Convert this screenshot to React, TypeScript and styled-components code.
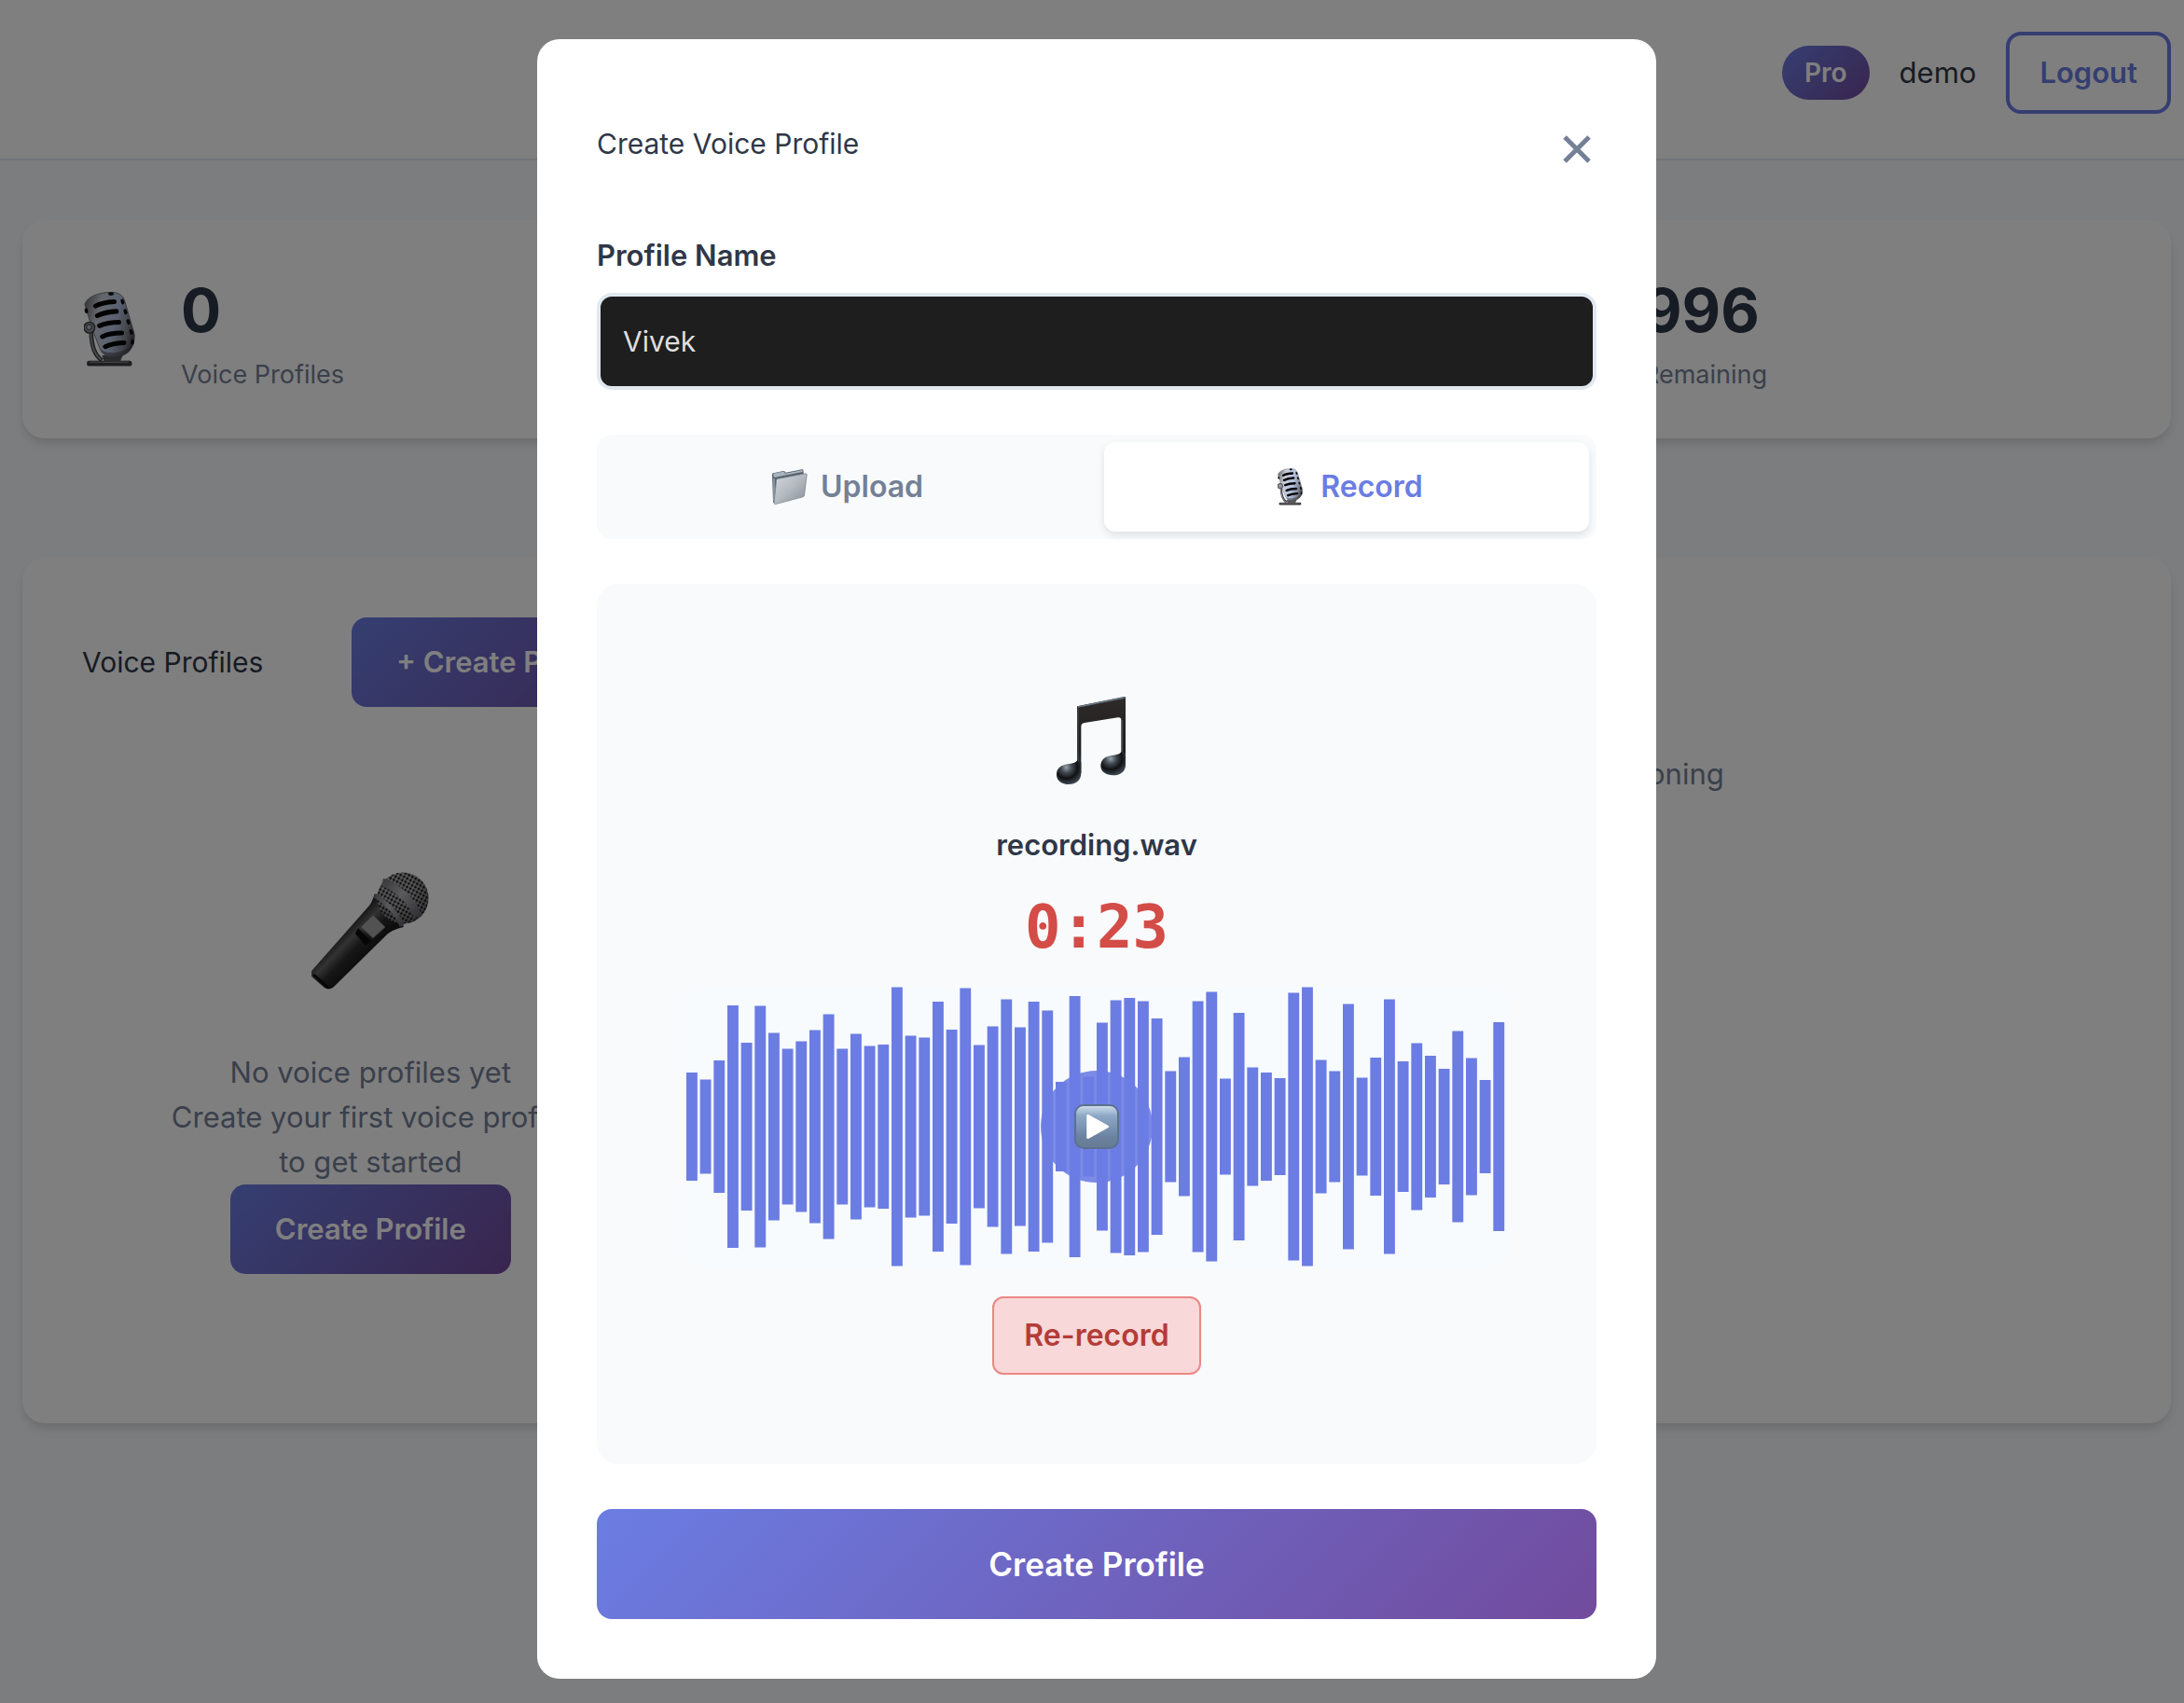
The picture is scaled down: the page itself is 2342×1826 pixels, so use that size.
import React, { useState } from 'react';
import styled, { createGlobalStyle, css } from 'styled-components';

const ink = '#2f3747';
const muted = '#748096';
const primary = '#6b7de3';
const gradient = 'linear-gradient(135deg, #6b7de3 0%, #714b9d 100%)';
const cardShadow = '0 8px 12px -2px rgba(0, 0, 0, 0.1), 0 4px 8px -2px rgba(0, 0, 0, 0.06)';

const GlobalStyle = createGlobalStyle`
  *, *::before, *::after { box-sizing: border-box; }
  body {
    margin: 0;
    background: #f8fafc;
    color: ${ink};
    font-family: Inter, "Liberation Sans", sans-serif;
    font-size: 31px;
    line-height: 48px;
  }
  button, input { font: inherit; }
  button { cursor: pointer; }
  p { margin: 0; }
  h1, h2 { margin: 0; font-size: 30px; font-weight: 400; }
  svg { display: block; }
`;

const Page = styled.div`
  min-height: 100vh;
`;

const Header = styled.header`
  display: flex;
  justify-content: flex-end;
  align-items: center;
  gap: 32px;
  padding: 34px 14px 48px 24px;
  background: #fff;
  border-bottom: 2px solid #e2e8f0;
`;

const Badge = styled.span`
  padding: 8px 24px;
  border-radius: 32px;
  background: ${gradient};
  color: #fff;
  font-size: 28px;
  line-height: 42px;
  font-weight: 600;
`;

const LogoutButton = styled.button`
  padding: 16px 32px;
  border: 4px solid ${primary};
  border-radius: 16px;
  background: transparent;
  color: ${primary};
  font-weight: 600;
`;

const Main = styled.main`
  padding: 64px 14px 64px 24px;
`;

const Stats = styled.section`
  display: grid;
  grid-template-columns: repeat(3, 1fr);
  gap: 48px;
  margin-bottom: 128px;
`;

const Card = styled.div`
  border-radius: 24px;
  background: #fff;
  box-shadow: ${cardShadow};
`;

const StatCard = styled(Card)`
  display: flex;
  align-items: center;
  gap: 48px;
  padding: 48px 64px;
`;

const StatIcon = styled.div`
  display: flex;
  justify-content: center;
  width: 58px;
`;

const StatValue = styled.div`
  font-size: 64px;
  line-height: 98px;
  font-weight: 700;
`;

const StatLabel = styled.div`
  color: ${muted};
  font-size: 27px;
  line-height: 40px;
`;

const Columns = styled.section`
  display: grid;
  grid-template-columns: 1fr 2fr;
  gap: 64px;
`;

const Panel = styled(Card)`
  padding: 64px;
`;

const PanelHeader = styled.div`
  display: flex;
  justify-content: space-between;
  align-items: center;
  min-height: 96px;
  margin-bottom: 48px;
`;

const PrimaryButton = styled.button<{ $large?: boolean }>`
  padding: 24px 48px;
  border: 0;
  border-radius: 16px;
  background: ${gradient};
  color: #fff;
  font-weight: 600;
  white-space: nowrap;
  ${({ $large }) =>
    $large &&
    css`
      width: 100%;
      padding: 35px 48px;
      font-size: 35px;
    `}
`;

const EmptyState = styled.div`
  display: flex;
  flex-direction: column;
  align-items: center;
  padding: 96px 64px;
  color: ${muted};
  text-align: center;
`;

const EmptyIcon = styled.div`
  padding: 33px 0;
  margin-bottom: 32px;
`;

const Hint = styled.p`
  color: ${muted};
  text-align: center;
`;

const Overlay = styled.div`
  position: fixed;
  inset: 0;
  display: flex;
  justify-content: center;
  align-items: flex-start;
  padding: 42px 0 26px 10px;
  overflow-y: auto;
  background: rgba(0, 0, 0, 0.5);
`;

const Modal = styled.div`
  width: 100%;
  max-width: 1200px;
  padding: 64px;
  border-radius: 24px;
  background: #fff;
`;

const ModalHeader = styled.div`
  display: flex;
  justify-content: space-between;
  align-items: center;
  min-height: 96px;
  margin-bottom: 48px;
`;

const CloseButton = styled.button`
  margin-top: 12px;
  padding: 0;
  border: 0;
  background: none;
  color: ${muted};
`;

const Field = styled.div`
  display: flex;
  flex-direction: column;
  gap: 16px;
  margin-bottom: 48px;
`;

const FieldLabel = styled.label`
  font-weight: 600;
`;

const TextInput = styled.input`
  width: 100%;
  height: 104px;
  padding: 0 24px;
  border: 4px solid #e2e8f0;
  border-radius: 16px;
  outline: none;
  background: #1e1e1e;
  color: #dfdfdf;
  font-size: 30px;
`;

const Tabs = styled.div`
  display: grid;
  grid-template-columns: 1fr 1fr;
  gap: 16px;
  margin-bottom: 48px;
  padding: 8px;
  border-radius: 16px;
  background: #f8fafc;
`;

const Tab = styled.button<{ $active: boolean }>`
  display: flex;
  justify-content: center;
  align-items: center;
  gap: 12px;
  padding: 24px;
  border: 0;
  border-radius: 12px;
  background: ${({ $active }) => ($active ? '#fff' : 'transparent')};
  box-shadow: ${({ $active }) => ($active ? '0 4px 8px rgba(0, 0, 0, 0.1)' : 'none')};
  color: ${({ $active }) => ($active ? primary : muted)};
  font-size: 32px;
  font-weight: 600;
`;

const TabIcon = styled.span`
  display: flex;
  justify-content: center;
  width: 42px;
`;

const Recorder = styled.div`
  display: flex;
  flex-direction: column;
  align-items: center;
  margin-bottom: 48px;
  padding: 96px;
  border-radius: 24px;
  background: #f8fafc;
`;

const NoteIcon = styled.div`
  padding: 25px 12px 25px 0;
`;

const FileName = styled.div`
  margin: 16px 0;
  font-weight: 600;
`;

const Timer = styled.div`
  margin-bottom: 16px;
  color: #d44c47;
  font-family: "DejaVu Sans Mono", monospace;
  font-size: 64px;
  line-height: 96px;
  font-weight: 700;
`;

const WaveBox = styled.div`
  position: relative;
  width: 100%;
  height: 300px;
  margin-bottom: 32px;
  border-radius: 16px;
  background: #f7fbfe;
`;

const PlayButton = styled.button`
  position: absolute;
  top: 50%;
  left: 50%;
  display: flex;
  justify-content: center;
  align-items: center;
  width: 120px;
  height: 120px;
  padding: 0;
  border: 0;
  border-radius: 50%;
  background: rgba(107, 125, 227, 0.9);
  transform: translate(-50%, -50%);
`;

const RerecordButton = styled.button`
  padding: 16px 32px;
  border: 2px solid #ec8784;
  border-radius: 12px;
  background: #f8d8d9;
  color: #b43c37;
  font-size: 32px;
  font-weight: 600;
`;

const levels = [
  116, 101, 142, 260, 180, 259, 201, 167, 183, 207, 241, 167, 199, 173, 176, 299, 195, 191, 268, 208,
  297, 175, 215, 273, 213, 268, 249, 96, 280, 107, 223, 271, 276, 269, 232, 119, 149, 269, 289, 103,
  244, 127, 116, 104, 287, 299, 143, 119, 263, 105, 148, 273, 140, 179, 152, 124, 205, 147, 100, 224,
];

function Waveform() {
  const pitch = 880 / levels.length;
  return (
    <svg width="100%" height="300" viewBox="0 0 880 300" preserveAspectRatio="none" aria-hidden="true">
      {levels.map((h, i) => (
        <rect key={i} x={i * pitch} y={150 - h / 2} width={pitch - 2.8} height={h} fill={primary} />
      ))}
    </svg>
  );
}

function StudioMic({ id, height }: { id: string; height: number }) {
  return (
    <svg width={Math.round((height * 142) / 207)} height={height} viewBox="0 0 142 207" aria-hidden="true">
      <defs>
        <linearGradient id={id} x1="0" y1="0.3" x2="1" y2="0.6">
          <stop offset="0" stopColor="#75797f" />
          <stop offset="0.25" stopColor="#c9ced6" />
          <stop offset="0.6" stopColor="#b4c3e4" />
          <stop offset="0.85" stopColor="#858a94" />
          <stop offset="1" stopColor="#4c4c50" />
        </linearGradient>
      </defs>
      <rect x="8" y="191" width="125" height="15" rx="7" fill="#3c3d40" />
      <path d="M16 195h108" stroke="#85868a" strokeWidth="3" />
      <path d="M50 176h58l-8 18H56z" fill="#55565a" />
      <path d="M20 108c0 34 6 66 30 82" fill="none" stroke="#414246" strokeWidth="12" />
      <path d="M19 108c0 34 7 62 28 80" fill="none" stroke="#9a9ba0" strokeWidth="4" />
      <path
        d="M2 34C9 14 38 2 72 1c24-1 36 8 41 24l27 92c2 32-12 54-40 61-28 6-48-1-55-18L22 100z"
        fill={`url(#${id})`}
        stroke="#5b5d62"
        strokeWidth="2"
      />
      <path d="M46 158c12 16 60 16 88-12-4 22-22 32-42 34-24 2-40-6-46-22z" fill="#3c3c3f" opacity="0.55" />
      <g fill="none" stroke="#060608" strokeWidth="13" strokeLinecap="round">
        <path d="M32 39c14-8 34-11 52-12M37 66c16-8 34-11 53-12M43 94c16-7 34-10 54-10M51 124c16-8 34-10 54-10M59 152c16-8 32-10 52-11" />
      </g>
      <g fill="none" stroke="#0c0c0e" strokeWidth="9" strokeLinecap="round">
        <path d="M106 24l2 6M114 52l2 6M122 80l2 6M130 108l2 6M135 136l-1 6M6 50l1 5M72 5h6" />
      </g>
      <circle cx="15" cy="99" r="15" fill="#8f9299" stroke="#404247" strokeWidth="4" />
      <circle cx="14" cy="98" r="7" fill="#b9c2d0" stroke="#55585f" strokeWidth="3" />
    </svg>
  );
}

function StageMic() {
  return (
    <svg width="126" height="126" viewBox="0 0 126 126" aria-hidden="true">
      <defs>
        <linearGradient id="stage-handle" x1="0.35" y1="0.4" x2="0.6" y2="0.65">
          <stop offset="0" stopColor="#2c2c2c" />
          <stop offset="0.3" stopColor="#666" />
          <stop offset="0.6" stopColor="#2d2d2d" />
          <stop offset="1" stopColor="#1a1a1a" />
        </linearGradient>
        <linearGradient id="stage-band" x1="0" y1="0" x2="1" y2="1">
          <stop offset="0" stopColor="#77777c" />
          <stop offset="0.45" stopColor="#b5b5bb" />
          <stop offset="1" stopColor="#63636a" />
        </linearGradient>
        <pattern id="stage-mesh" width="4" height="4" patternUnits="userSpaceOnUse" patternTransform="rotate(28)">
          <rect width="4" height="4" fill="#b4b4b6" />
          <circle cx="2" cy="2" r="1.4" fill="#17171a" />
        </pattern>
        <radialGradient id="stage-shade" cx="0.4" cy="0.3" r="0.75">
          <stop offset="0.4" stopColor="#000" stopOpacity="0" />
          <stop offset="1" stopColor="#000" stopOpacity="0.4" />
        </radialGradient>
      </defs>
      <path
        d="M1 105L62 36c3-4 4-8 6-13l31 36c-6 1-11 3-17 7L24 123c-3 3-7 3-10 1L1 113c-2-2-2-5 0-8z"
        fill="url(#stage-handle)"
      />
      <path d="M2 110l16 14" stroke="#111" strokeWidth="3" />
      <circle cx="98" cy="28" r="27.5" fill="url(#stage-mesh)" />
      <circle cx="98" cy="28" r="27.5" fill="url(#stage-shade)" />
      <path d="M76 11c12 3 32 18 38 37" fill="none" stroke="url(#stage-band)" strokeWidth="9" />
      <path d="M68 25c9 6 24 18 29 33" fill="none" stroke="url(#stage-band)" strokeWidth="5" />
      <path d="M50 60l14 14-6 5-11-13z" fill="#0c0c0c" />
      <path d="M66 46l13 13-13 12-13-12z" fill="#a5a5a5" stroke="#6b6b6b" />
    </svg>
  );
}

function MusicNote() {
  return (
    <svg width="74" height="94" viewBox="0 0 222 282" aria-hidden="true">
      <defs>
        <radialGradient id="note-head" cx="0.4" cy="0.3" r="0.7">
          <stop offset="0" stopColor="#9aa4ad" />
          <stop offset="0.3" stopColor="#474e56" />
          <stop offset="0.65" stopColor="#101114" />
          <stop offset="1" stopColor="#3d4751" />
        </radialGradient>
        <linearGradient id="note-beam" x1="0" y1="0" x2="0" y2="1">
          <stop offset="0" stopColor="#2f2a2a" />
          <stop offset="0.7" stopColor="#231e1e" />
          <stop offset="1" stopColor="#2f4050" />
        </linearGradient>
      </defs>
      <path
        d="M66 31L218 0q4 0 4 4v220h-14V76q0-11-11-9L90 84q-11 2-11 12v150H66z"
        fill="url(#note-beam)"
      />
      <path d="M68 33L219 3" stroke="#6a7987" strokeWidth="4" />
      <path d="M69 40v200M211 76v130" stroke="#435361" strokeWidth="3" />
      <path d="M0 251c0-22 16-31 36-34 16-3 26-4 31-13l12 6v36c0 24-18 36-40 36S0 270 0 251z" fill="url(#note-head)" />
      <path d="M142 223c0-22 16-31 36-34 16-3 26-4 31-13l13 6v36c0 24-18 35-40 35s-40-11-40-30z" fill="url(#note-head)" />
    </svg>
  );
}

function FolderIcon() {
  return (
    <svg width="38" height="38" viewBox="0 0 38 38" aria-hidden="true">
      <defs>
        <linearGradient id="folder-front" x1="0" y1="0" x2="1" y2="1">
          <stop offset="0" stopColor="#d3d9df" />
          <stop offset="0.5" stopColor="#b3b9bf" />
          <stop offset="1" stopColor="#858d94" />
        </linearGradient>
      </defs>
      <path d="M0 5.500Q0 4.500 1 4.200L12 2q1.200-.2 1.700.6l.8 1.200L32 .2q1.400-.2 1.500 1L34 8 4 37l-2-.4L1 35z" fill="#54626e" />
      <path d="M1 4.800L12.500 2.600l1.600 2.200L32.500 1.100l.2 1.800L2 9z" fill="#a9b4be" />
      <path d="M2 10v24" stroke="#97a3ad" strokeWidth="1.500" />
      <path d="M5.600 10.500L36 4.800q1.400-.1 1.200 1.400L34.500 28q-.2 1.300-1.500 1.800L3.500 37.600q-1.500.2-1.400-1.300L4.600 11.800q.1-1.100 1-1.300z" fill="url(#folder-front)" stroke="#7f8992" strokeWidth="0.8" />
    </svg>
  );
}

function PlayIcon() {
  return (
    <svg width="48" height="48" viewBox="0 0 48 48" aria-hidden="true">
      <defs>
        <linearGradient id="play-face" x1="0" y1="0" x2="0" y2="1">
          <stop offset="0" stopColor="#d3e0ec" />
          <stop offset="0.25" stopColor="#8ca8c6" />
          <stop offset="0.75" stopColor="#6a829f" />
          <stop offset="1" stopColor="#667b94" />
        </linearGradient>
      </defs>
      <rect x="1" y="1" width="46" height="46" rx="9" fill="url(#play-face)" stroke="#5b718e" strokeWidth="2" />
      <path d="M14.500 12.200v23.600L36 24z" fill="#fff" stroke="#fff" strokeWidth="2.500" strokeLinejoin="round" />
    </svg>
  );
}

function CloseIcon() {
  return (
    <svg width="40" height="40" viewBox="0 0 40 40" aria-hidden="true">
      <path d="M6 7l26 26M32 7L6 33" stroke="currentColor" strokeWidth="5" />
    </svg>
  );
}

export default function App() {
  const [name, setName] = useState('Vivek');
  const [tab, setTab] = useState('record');

  return (
    <Page>
      <GlobalStyle />
      <Header>
        <Badge>Pro</Badge>
        <span>demo</span>
        <LogoutButton type="button">Logout</LogoutButton>
      </Header>
      <Main>
        <Stats>
          <StatCard>
            <StatIcon>
              <StudioMic id="stat-mic" height={80} />
            </StatIcon>
            <div>
              <StatValue>0</StatValue>
              <StatLabel>Voice Profiles</StatLabel>
            </div>
          </StatCard>
          <StatCard />
          <StatCard>
            <StatIcon />
            <div>
              <StatValue>996</StatValue>
              <StatLabel>Remaining</StatLabel>
            </div>
          </StatCard>
        </Stats>
        <Columns>
          <Panel>
            <PanelHeader>
              <h2>Voice Profiles</h2>
              <PrimaryButton type="button">+ Create Profile</PrimaryButton>
            </PanelHeader>
            <EmptyState>
              <EmptyIcon>
                <StageMic />
              </EmptyIcon>
              <p>No voice profiles yet</p>
              <p>
                Create your first voice profile
                <br />
                to get started
              </p>
              <PrimaryButton type="button">Create Profile</PrimaryButton>
            </EmptyState>
          </Panel>
          <Panel>
            <PanelHeader />
            <Hint>Select a voice profile to start cloning</Hint>
          </Panel>
        </Columns>
      </Main>
      <Overlay>
        <Modal role="dialog" aria-modal="true" aria-labelledby="dialog-title">
          <ModalHeader>
            <h1 id="dialog-title">Create Voice Profile</h1>
            <CloseButton type="button" aria-label="Close">
              <CloseIcon />
            </CloseButton>
          </ModalHeader>
          <Field>
            <FieldLabel htmlFor="profile-name">Profile Name</FieldLabel>
            <TextInput id="profile-name" type="text" value={name} onChange={(e) => setName(e.target.value)} />
          </Field>
          <Tabs>
            <Tab type="button" $active={tab === 'upload'} onClick={() => setTab('upload')}>
              <TabIcon>
                <FolderIcon />
              </TabIcon>
              Upload
            </Tab>
            <Tab type="button" $active={tab === 'record'} onClick={() => setTab('record')}>
              <TabIcon>
                <StudioMic id="tab-mic" height={40} />
              </TabIcon>
              Record
            </Tab>
          </Tabs>
          <Recorder>
            <NoteIcon>
              <MusicNote />
            </NoteIcon>
            <FileName>recording.wav</FileName>
            <Timer>0:23</Timer>
            <WaveBox>
              <Waveform />
              <PlayButton type="button" aria-label="Play">
                <PlayIcon />
              </PlayButton>
            </WaveBox>
            <RerecordButton type="button">Re-record</RerecordButton>
          </Recorder>
          <PrimaryButton type="button" $large>
            Create Profile
          </PrimaryButton>
        </Modal>
      </Overlay>
    </Page>
  );
}
